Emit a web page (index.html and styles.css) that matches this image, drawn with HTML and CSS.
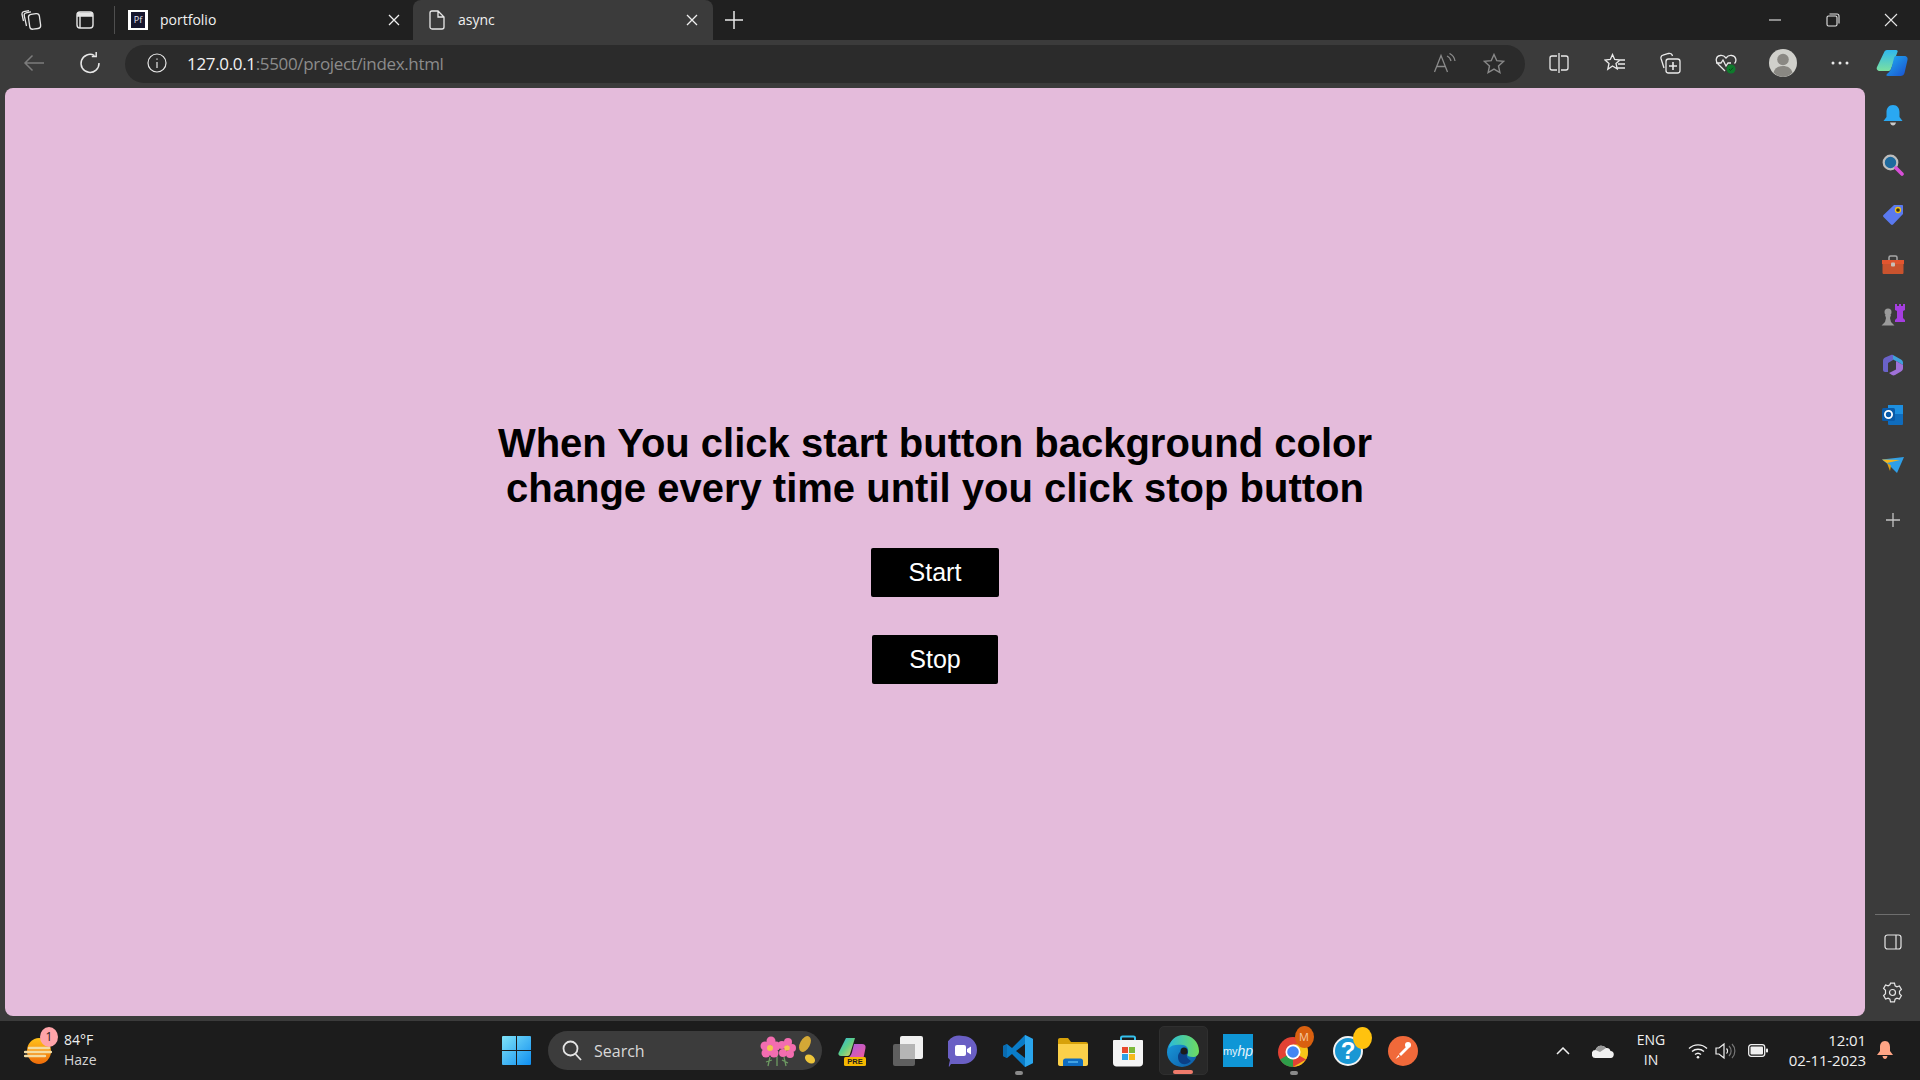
FILE: index.html
```html
<!DOCTYPE html>
<html lang="en">
<head>
  <meta charset="UTF-8" />
  <title>async</title>
  <link rel="stylesheet" href="styles.css">
</head>
<body>
  <div class="desktop">
    <!-- tab strip -->
    <div class="tabstrip">
      <span class="slot first">
        <svg width="22" height="22" viewBox="0 0 22 22" fill="none" stroke="#e6e6e6" stroke-width="1.3"><rect x="8" y="5" width="11" height="15" rx="3" transform="rotate(-8 13 12)"/><path d="M5.500 17 3.200 6.500C3 5 3.800 4 5 3.800L10 2.800M2.500 12 1 5.500C.8 4 1.500 3 2.800 2.700L8 1.600"/></svg>
      </span>
      <span class="slot second">
        <svg width="20" height="20" viewBox="0 0 20 20" fill="none" stroke="#e6e6e6" stroke-width="1.4"><rect x="2" y="2" width="16" height="16" rx="3"/><path d="M2 6h16M5 6v12" /><rect x="2.500" y="2.500" width="15" height="3.500" fill="#e6e6e6" stroke="none"/></svg>
      </span>
      <span class="divider"></span>
      <div class="tab">
        <span class="favicon"><span class="favicon-inner">Pf</span></span>
        <span class="tab-title">portfolio</span>
        <svg class="tab-close" width="12" height="12" viewBox="0 0 12 12" stroke="#f0f0f0" stroke-width="1.3"><path d="M1 1l10 10M11 1 1 11"/></svg>
      </div>
      <div class="tab active">
        <svg class="file-icon" width="16" height="20" viewBox="0 0 16 20" fill="none" stroke="#e8e8e8" stroke-width="1.3"><path d="M3 1h6l6 6v10a2 2 0 0 1-2 2H3a2 2 0 0 1-2-2V3a2 2 0 0 1 2-2zM9 1v6h6"/></svg>
        <span class="tab-title">async</span>
        <svg class="tab-close" width="12" height="12" viewBox="0 0 12 12" stroke="#f0f0f0" stroke-width="1.3"><path d="M1 1l10 10M11 1 1 11"/></svg>
      </div>
      <span class="new-tab">
        <svg width="18" height="18" viewBox="0 0 18 18" stroke="#e8e8e8" stroke-width="1.5"><path d="M9 0v18M0 9h18"/></svg>
      </span>
      <div class="window-controls">
        <svg width="58" height="14" viewBox="0 0 14 14" stroke="#e6e6e6" stroke-width="1.1"><path d="M1 7h12"/></svg>
        <svg width="58" height="14" viewBox="0 0 14 14" fill="none" stroke="#e6e6e6" stroke-width="1.1"><rect x="1" y="3" width="10" height="10" rx="1.500"/><path d="M3.500 1H11a2 2 0 0 1 2 2v7.500"/></svg>
        <svg width="58" height="14" viewBox="0 0 14 14" stroke="#e6e6e6" stroke-width="1.1"><path d="M1 1l12 12M13 1 1 13"/></svg>
      </div>
    </div>

    <!-- toolbar -->
    <div class="toolbar">
      <span class="tool back">
        <svg width="22" height="18" viewBox="0 0 22 18" fill="none" stroke="#7c7c7c" stroke-width="1.5"><path d="M21 9H2M9.500 1.500 2 9l7.500 7.500"/></svg>
      </span>
      <span class="tool reload">
        <svg width="22" height="22" viewBox="0 0 22 22" fill="none" stroke="#e8e8e8" stroke-width="1.5"><path d="M15.500 3.600A9 9 0 1 0 20 11"/><path d="M17.200 0v4.400h-4.400"/></svg>
      </span>
      <div class="addressbar">
        <svg class="info" width="20" height="20" viewBox="0 0 20 20" fill="none" stroke="#e6e6e6" stroke-width="1.2"><circle cx="10" cy="10" r="9"/><path d="M10 9v6M10 5.400v1.400"/></svg>
        <span class="url">127.0.0.1<span class="url-rest">:5500/project/index.html</span></span>
        <svg class="read" width="24" height="20" viewBox="0 0 24 20" fill="none" stroke="#8a8a8a" stroke-width="1.3"><path d="M1.500 19 8 2.500 14.500 19M4 13.500h8.500M14 3a7 7 0 0 1 4 5M16.500 .5a10 10 0 0 1 5.500 7.500"/></svg>
        <svg class="star" width="22" height="21" viewBox="0 0 22 21" fill="none" stroke="#8a8a8a" stroke-width="1.4"><path d="m11 1.500 2.800 6.200 6.700.7-5 4.500 1.400 6.600-5.900-3.400-5.900 3.400 1.400-6.600-5-4.500 6.700-.7z"/></svg>
      </div>
      <div class="tool-group">
        <span class="tool-item">
          <svg width="20" height="20" viewBox="0 0 20 20" fill="none" stroke="#eaeaea" stroke-width="1.3"><path d="M8 3H3a2 2 0 0 0-2 2v10a2 2 0 0 0 2 2h5M12 3h5a2 2 0 0 1 2 2v10a2 2 0 0 1-2 2h-5M10 0v20"/></svg>
        </span>
        <span class="tool-item">
          <svg width="22" height="20" viewBox="0 0 22 20" fill="none" stroke="#eaeaea" stroke-width="1.3"><path d="m8.500 1.500 2.200 5 5.300.5-4 3.500 1.200 5.300-4.700-2.800-4.700 3.300 1.200-5.800-4-3.500 5.300-.5zM15 7h6M14 11h7M13 15h8"/></svg>
        </span>
        <span class="tool-item">
          <svg width="22" height="22" viewBox="0 0 22 22" fill="none" stroke="#eaeaea" stroke-width="1.3"><path d="M5 16 2 6.500C1.600 4.800 2.600 3.500 4 3.200L9.500 1.500C11.500 1 13 2 13.500 4"/><rect x="7" y="7" width="14" height="14" rx="2.500"/><path d="M14 10v8M10 14h8" stroke-width="1.600"/></svg>
        </span>
        <span class="tool-item">
          <svg width="22" height="22" viewBox="0 0 22 22"><path d="M10 19 3 12C0 9 1 4 5 3.500 7.500 3 9.500 4 11 6 12.500 4 14.500 3 17 3.500 21 4 22 9 19.500 11.500M1 11h5l2-3 3 6 2-3h3" fill="none" stroke="#eaeaea" stroke-width="1.300"/><circle cx="16" cy="17" r="4.500" fill="#0e7a2c"/><path d="m14 17 1.500 1.500 2.500-2.800" fill="none" stroke="#0b4a1c" stroke-width="1"/></svg>
        </span>
        <span class="tool-item avatar">
          <svg width="28" height="28" viewBox="0 0 28 28"><circle cx="14" cy="14" r="14" fill="#d0d0cb"/><circle cx="14" cy="10.500" r="5.800" fill="#8a8883"/><path d="M4.500 23.500c1.500-4.500 5-6.500 9.500-6.500s8 2 9.500 6.500A14 14 0 0 1 14 28a14 14 0 0 1-9.500-4.500z" fill="#8a8883"/></svg>
        </span>
        <span class="tool-item dots">
          <svg width="18" height="4" viewBox="0 0 18 4" fill="#eaeaea"><circle cx="2" cy="2" r="1.500"/><circle cx="9" cy="2" r="1.500"/><circle cx="16" cy="2" r="1.500"/></svg>
        </span>
        <span class="tool-item copilot">
          <svg width="32" height="28" viewBox="0 0 32 28"><defs><linearGradient id="cpa" x1="0" y1="0" x2="0" y2="1"><stop offset="0" stop-color="#2fb8ee"/><stop offset="1" stop-color="#7be0a0"/></linearGradient><linearGradient id="cpb" x1="0" y1="0" x2="1" y2="1"><stop offset="0" stop-color="#1fb0f2"/><stop offset="1" stop-color="#1a4fd0"/></linearGradient></defs><path d="M11 1h9c1.500 0 2 1 1.500 2L15 20c-.5 1.500-1.500 2-3 2H4c-2.500 0-4-2-3-4L8 3.500C8.500 2 9.500 1 11 1z" fill="url(#cpa)"/><path d="M20 7h8c3 0 4 2 3.500 4l-3 13c-.5 2-2 3-4 3H12c-2 0-2-1-1-2 3-2 4-5 5-8l2-8c.3-1.300 1-2 2-2z" fill="url(#cpb)"/></svg>
        </span>
      </div>
    </div>

    <div class="workspace">
      <!-- the page itself -->
      <main class="viewport">
        <h1>When You click start button background color<br>change every time until you click stop button</h1>
        <button class="action start" type="button">Start</button>
        <button class="action stop" type="button">Stop</button>
      </main>

      <!-- edge sidebar -->
      <aside class="sidebar">
        <div class="side-icons">
          <span class="side-item"><svg width="22" height="22" viewBox="0 0 22 22"><path d="M11 1c4.500 0 6.500 3.500 6.500 7v5l3 4H1.500l3-4V8C4.500 4.500 6.500 1 11 1z" fill="#2aa8f2"/><path d="M8 18.500h6c-.5 2-1.500 3-3 3s-2.500-1-3-3z" fill="#c9c9c9"/></svg></span>
          <span class="side-item"><svg width="22" height="22" viewBox="0 0 22 22"><circle cx="8.500" cy="8.500" r="6.800" fill="#1e6a9e" stroke="#bdbdbd" stroke-width="2.200"/><path d="m14 14 6 6" stroke="#d84fd8" stroke-width="3.600" stroke-linecap="round"/></svg></span>
          <span class="side-item"><svg width="22" height="22" viewBox="0 0 22 22"><path d="M12 1h8c.6 0 1 .4 1 1v8L11 20.500c-.6.600-1.400.600-2 0L1.500 13c-.6-.6-.6-1.400 0-2z" fill="#5a79ef"/><circle cx="16" cy="6" r="2.500" fill="#3a3010" stroke="#f2c21a" stroke-width="1.300"/></svg></span>
          <span class="side-item"><svg width="24" height="20" viewBox="0 0 24 20"><path d="M8 5V2.500C8 1.500 8.500 1 9.500 1h5c1 0 1.500.5 1.500 1.500V5" fill="none" stroke="#a8a8a8" stroke-width="1.500"/><path d="M1 5h22v4H1z" fill="#e2552f"/><path d="M1.500 9h21v8.500c0 1-.5 1.500-1.500 1.500H3c-1 0-1.500-.5-1.500-1.500z" fill="#c9532e"/><rect x="10" y="7.500" width="4" height="4" rx="1" fill="#c8c0b8"/></svg></span>
          <span class="side-item"><svg width="24" height="22" viewBox="0 0 24 22"><path d="M14 0h2v2h2V0h2v2h2V0h2v6l-2 1v7l2 2v2H14v-2l2-2V7l-2-1z" fill="#a53ee0"/><circle cx="7" cy="8" r="3.500" fill="#9a9a9a"/><path d="M4 11h6l-1 3 1 4 3.500 3.500H.5L4 18l1-4z" fill="#9a9a9a"/></svg></span>
          <span class="side-item"><svg width="22" height="22" viewBox="0 0 22 22"><path d="M11 1 19 5.500C20.500 6.500 21 7.500 21 9v2L14 7 11 5.500z" fill="#3fa0dc"/><path d="M21 11v3c0 1.500-.5 2.500-2 3.500L13 21c-1 .5-2 .5-3 0l-3-2 7-3.500V7z" fill="#a071d8"/><path d="M1 16V7c0-1.500.5-2.500 2-3.500L9 1c.7-.3 1.400-.3 2 0v5L6 9v9l-3 0C2 18 1 17 1 16z" fill="#6a62c9"/></svg></span>
          <span class="side-item"><svg width="22" height="20" viewBox="0 0 22 20"><rect x="6" y="0" width="15" height="10" fill="#1d8fe0"/><path d="M6 9h15v10a1 1 0 0 1-1 1H7a1 1 0 0 1-1-1z" fill="#0f6cbd"/><rect x="0" y="3" width="13" height="13" rx="1.500" fill="#0a5aa8"/><circle cx="6.500" cy="9.500" r="3.600" fill="none" stroke="#fff" stroke-width="1.800"/></svg></span>
          <span class="side-item"><svg width="22" height="16" viewBox="0 0 22 16"><path d="M0 2.500 22 0 15 16 8 9z" fill="#2f9fe8"/><path d="M0 2.500 18 3 5 6z" fill="#f5b51b"/><path d="M5 6 8 14 9 8.500z" fill="#e0a011"/></svg></span>
          <span class="side-item plus"><svg width="16" height="16" viewBox="0 0 16 16" stroke="#c4c4c4" stroke-width="1.300"><path d="M8 1v14M1 8h14"/></svg></span>
        </div>
        <div class="side-bottom">
          <span class="side-rule"></span>
          <span class="side-item"><svg width="18" height="16" viewBox="0 0 18 16" fill="none" stroke="#e6e6e6" stroke-width="1.200"><rect x="1" y="1" width="16" height="14" rx="2.500"/><path d="M12 1v14"/></svg></span>
          <span class="side-item"><svg width="21" height="21" viewBox="0 0 21 21" fill="none" stroke="#e6e6e6" stroke-width="1.200"><circle cx="10.500" cy="10.500" r="3"/><path d="M8.500 1.200h4l.6 2.600 1.800 1 2.500-.8 2 3.500-1.900 1.800v2.400l1.900 1.800-2 3.500-2.500-.8-1.800 1-.6 2.600h-4l-.6-2.600-1.800-1-2.500.8-2-3.500 1.900-1.800V8.300L1.600 6.500l2-3.500 2.500.8 1.800-1z"/></svg></span>
        </div>
      </aside>
    </div>

    <!-- windows taskbar -->
    <footer class="taskbar">
      <div class="weather">
        <svg class="weather-icon" width="28" height="26" viewBox="0 0 28 26"><defs><linearGradient id="sun" x1="0" y1="0" x2="0" y2="1"><stop offset="0" stop-color="#ffc21a"/><stop offset="1" stop-color="#ef6c0a"/></linearGradient></defs><ellipse cx="15" cy="13" rx="12" ry="13" fill="url(#sun)"/><path d="M5 10h20M1 14h26M1 18h20" stroke="#f3dca2" stroke-width="2.400" stroke-linecap="round"/></svg>
        <span class="badge">1</span>
        <div class="weather-text">
          <span>84°F</span>
          <span>Haze</span>
        </div>
      </div>
      <svg class="start-icon" width="29" height="29" viewBox="0 0 29 29"><defs><linearGradient id="win" x1="0" y1="0" x2="1" y2="1"><stop offset="0" stop-color="#7fe3f8"/><stop offset="1" stop-color="#0f8ef0"/></linearGradient></defs><g fill="url(#win)"><path d="M0 1a1 1 0 0 1 1-1h13v14H0zM15 0h13a1 1 0 0 1 1 1v13H15zM0 15h14v14H1a1 1 0 0 1-1-1zM15 15h14v13a1 1 0 0 1-1 1H15z"/></g></svg>
      <div class="search">
        <svg width="20" height="21" viewBox="0 0 20 21" fill="none" stroke="#e4e4e4" stroke-width="1.800"><circle cx="8.500" cy="8.500" r="7"/><path d="m13.500 14 5.500 6"/></svg>
        <span class="search-label">Search</span>
        <svg class="search-art" width="62" height="32" viewBox="0 0 62 32"><path d="M12 22 10 31M26 22l2 9M19 20v11M8 27l6-2M30 28l-6-3" stroke="#6d9a62" stroke-width="1.300"/><g fill="#f36db0"><circle cx="7" cy="11" r="4.500"/><circle cx="13" cy="6" r="4.500"/><circle cx="18" cy="11" r="4.500"/><circle cx="8" cy="18" r="4.500"/><circle cx="16" cy="18" r="4.500"/><circle cx="24" cy="10" r="4"/><circle cx="30" cy="7" r="4"/><circle cx="34" cy="13" r="4"/><circle cx="25" cy="18" r="4"/><circle cx="32" cy="19" r="4"/></g><circle cx="12" cy="13" r="3" fill="#f4c84e"/><circle cx="29" cy="13" r="2.800" fill="#f4c84e"/><ellipse cx="47" cy="9" rx="5" ry="8.500" transform="rotate(28 47 9)" fill="#d4a836"/><ellipse cx="52" cy="24" rx="5.500" ry="4" transform="rotate(35 52 24)" fill="#eec53a"/></svg>
      </div>
      <div class="apps">
        <span class="app"><svg width="30" height="30" viewBox="0 0 30 30"><defs><linearGradient id="pa" x1="0" y1="0" x2="1" y2="1"><stop offset="0" stop-color="#28b4e8"/><stop offset=".5" stop-color="#5fcf86"/><stop offset="1" stop-color="#f0d060"/></linearGradient><linearGradient id="pb" x1="0" y1="0" x2="1" y2="1"><stop offset="0" stop-color="#a85be0"/><stop offset="1" stop-color="#f05a9c"/></linearGradient></defs><path d="M8 2h9l-5 16c-.5 1.500-1.500 2-3 2H3c-2 0-3-1.500-2.500-3z" fill="url(#pa)"/><path d="M16 8h8c2.500 0 4 1.500 3.500 4l-2 10H10c3-2 4-5 4.500-8z" fill="url(#pb)"/><rect x="6" y="21" width="22" height="9" rx="1.500" fill="#f5b800"/><text class="pre-text" x="17" y="28.300" text-anchor="middle">PRE</text></svg></span>
        <span class="app"><svg width="30" height="30" viewBox="0 0 30 30"><rect x="0" y="8" width="22" height="22" rx="2" fill="#5f5f5f"/><rect x="7" y="0" width="23" height="23" rx="2" fill="#f0f0f0"/><rect x="7" y="8" width="15" height="15" fill="#b5b5b5"/></svg></span>
        <span class="app"><svg width="30" height="32" viewBox="0 0 30 32"><path d="M15 1a14 14 0 0 1 0 28H3l-2 3c-.4-1 0-3 1-7A14 14 0 0 1 15 1z" fill="#6a5fc4"/><rect x="7" y="10" width="11" height="11" rx="2" fill="#fff"/><path d="m19 14 4-2.500v8L19 17z" fill="#fff"/></svg></span>
        <span class="app app-open"><svg width="30" height="32" viewBox="0 0 30 32"><path d="M22 0 30 4v24l-8 4L9 19l-5 4-4-2v-10l4-2 5 4z" fill="#0a7cc8"/><path d="M22 0 30 4v24l-8 4z" fill="#2aa5ec"/><path d="M22 9 13 16l9 7z" fill="#1c1c1c"/><path d="M0 11 4 9v14l-4-2z" fill="#0a6bb0"/></svg></span>
        <span class="app"><svg width="30" height="30" viewBox="0 0 30 30"><path d="M0 4c0-1.200.8-2 2-2h8l3 4h15c1.200 0 2 .8 2 2v4H0z" fill="#d7a109"/><path d="M0 8h30v20c0 1.200-.8 2-2 2H2c-1.200 0-2-.8-2-2z" fill="#fbd04a"/><path d="M5 30v-5c0-1.500 1-2.500 2.500-2.500h15c1.500 0 2.500 1 2.500 2.500v5z" fill="#0f6cc0"/><path d="M10 26h10" stroke="#4fb0ee" stroke-width="1.600"/></svg></span>
        <span class="app"><svg width="30" height="32" viewBox="0 0 30 32"><path d="M8 7V3c0-1 .5-1.500 1.500-1.500h11c1 0 1.500.5 1.500 1.500v4" fill="none" stroke="#35c0ec" stroke-width="2"/><path d="M1 5h28c.5 0 1 .5 1 1v22c0 2-1.500 3.500-3.500 3.500h-23C1.500 31.500 0 30 0 28V6c0-.5.500-1 1-1z" fill="#f4f4f4"/><rect x="9" y="12" width="6" height="6" fill="#e8492e"/><rect x="16" y="12" width="6" height="6" fill="#7cb93a"/><rect x="9" y="19" width="6" height="6" fill="#2da1e8"/><rect x="16" y="19" width="6" height="6" fill="#f5ba1c"/></svg></span>
        <span class="app app-active"><svg width="32" height="32" viewBox="0 0 32 32"><defs><linearGradient id="ea" x1="0" y1="0" x2="1" y2="1"><stop offset="0" stop-color="#1a9fe0"/><stop offset="1" stop-color="#0c59a4"/></linearGradient><linearGradient id="eb" x1="0" y1="0" x2="1" y2="0"><stop offset="0" stop-color="#2bbcd8"/><stop offset="1" stop-color="#6fdc5e"/></linearGradient></defs><circle cx="15" cy="17" r="15" fill="url(#ea)"/><path d="M2 13C3 5 9 0 16 0c9 0 16 7 16 16 0 4-3 6-6 6-4 0-6-1-6-3 2-2 2-8-4-9-6-1-12 0-14 3z" fill="url(#eb)"/><path d="M24 26c-6 6-13 3-13-4 0-4 3-7 7-8 3 1 4 4 2 6-1 2 1 4 4 6z" fill="#0b3f86"/><circle cx="17" cy="16" r="3.500" fill="#1c1c1c"/></svg></span>
        <span class="app"><span class="myhp">my<em>hp</em></span></span>
        <span class="app app-open"><svg width="30" height="32" viewBox="0 0 30 32"><circle cx="15" cy="17" r="15" fill="#e24234"/><path d="M15 17 2 24.500A15 15 0 0 0 15 32z" fill="#2e9d49"/><path d="M15 17 28 24.500 15 32A15 15 0 0 0 30 17c0-3-1-6-2-7.500H15z" fill="#f5c518"/><circle cx="15" cy="17" r="7.500" fill="#fff"/><circle cx="15" cy="17" r="5.800" fill="#4285f4"/></svg><span class="mail-badge">M</span></span>
        <span class="app"><svg width="30" height="30" viewBox="0 0 30 30"><circle cx="15" cy="15" r="14" fill="#1997d4" stroke="#f2f2f2" stroke-width="2"/><text class="help-mark" x="15" y="23" text-anchor="middle">?</text></svg><span class="dot-badge"></span></span>
        <span class="app"><svg width="30" height="30" viewBox="0 0 30 30"><circle cx="15" cy="15" r="15" fill="#f0693a"/><circle cx="20" cy="9" r="3" fill="#fff"/><path d="M19 10 11 18l2 2 8-8zM10.500 19l-3 4 4-2.500z" fill="#fff"/></svg></span>
      </div>
      <div class="tray">
        <span class="tray-slot caret"><svg width="14" height="8" viewBox="0 0 14 8" fill="none" stroke="#f0f0f0" stroke-width="1.500"><path d="m1 7 6-6 6 6"/></svg></span>
        <span class="tray-slot cloud"><svg width="22" height="14" viewBox="0 0 22 14"><path d="M4 14A4 4 0 0 1 3.500 6 6 6 0 0 1 14 4a4 4 0 0 1 4.500 3A3.500 3.500 0 0 1 18 14z" fill="#f0f0f0"/><path d="M3.500 6A6 6 0 0 1 14 4L8 8z" fill="#9a9a9a"/></svg></span>
        <span class="tray-slot lang">ENG<br>IN</span>
        <span class="tray-slot wifi"><svg width="20" height="16" viewBox="0 0 20 16" fill="none" stroke="#f0f0f0" stroke-width="1.400"><path d="M1 5.500a13 13 0 0 1 18 0M4 8.500a9 9 0 0 1 12 0M7 11.500a4.500 4.500 0 0 1 6 0"/><circle cx="10" cy="14.300" r="1.300" fill="#f0f0f0" stroke="none"/></svg></span>
        <span class="tray-slot speaker"><svg width="21" height="18" viewBox="0 0 21 18" fill="none" stroke="#f0f0f0" stroke-width="1.200"><path d="M1 6v6h3l5 4V2L4 6z"/><path d="M11.500 6.500a3.500 3.500 0 0 1 0 5"/><path d="M14 4a7 7 0 0 1 0 10M17 2a10 10 0 0 1 0 14" stroke="#777"/></svg></span>
        <span class="tray-slot battery"><svg width="20" height="13" viewBox="0 0 20 13"><rect x=".7" y=".7" width="16" height="11.600" rx="2.500" fill="none" stroke="#f0f0f0" stroke-width="1.300"/><rect x="2.500" y="2.500" width="12.500" height="8" rx="1" fill="#f0f0f0"/><rect x="18" y="4.500" width="2" height="4" rx=".8" fill="#f0f0f0"/></svg></span>
        <span class="clock">12:01<br>02-11-2023</span>
        <span class="tray-slot notify"><svg width="16" height="19" viewBox="0 0 16 19"><path d="M8 0c3.500 0 5 3 5 6v4l3 4H0l3-4V6c0-3 1.500-6 5-6z" fill="#ffa585"/><path d="M5.500 15h5c-.3 2-1.300 3-2.500 3s-2.200-1-2.500-3z" fill="#ffa585"/></svg></span>
      </div>
    </footer>
  </div>
</body>
</html>
```

FILE: styles.css
```css
* {
  box-sizing: border-box;
}

html, body {
  margin: 0;
  height: 100%;
  overflow: hidden;
}

body {
  font-family: 'Open Sans', 'Noto Sans', sans-serif;
  background-color: #1c1c1c;
  color: #f0f0f0;
}

svg {
  flex: none;
}

.desktop {
  display: flex;
  flex-direction: column;
  width: 1920px;
  height: 1080px;
}

/* tab strip */
.tabstrip {
  display: flex;
  align-items: center;
  height: 40px;
  background-color: #202020;
  flex: none;
}

.slot {
  display: flex;
  justify-content: center;
  align-items: center;
}

.slot.first {
  width: 64px;
}

.slot.second {
  width: 42px;
}

.divider {
  width: 1px;
  height: 28px;
  margin-left: 8px;
  margin-right: 3px;
  background-color: #4f4f4f;
}

.tab {
  display: flex;
  align-items: center;
  width: 295px;
  height: 40px;
  padding-left: 10px;
  font-size: 14px;
  color: #f0f0f0;
}

.tab.active {
  width: 300px;
  padding-left: 16px;
  background-color: #3b3b3b;
  border-radius: 8px 8px 0 0;
}

.favicon {
  display: flex;
  justify-content: center;
  align-items: center;
  width: 20px;
  height: 20px;
  background-color: #fff;
  flex: none;
}

.favicon-inner {
  display: block;
  width: 14px;
  height: 16px;
  background-color: #16162e;
  color: #e8e8f4;
  font-size: 9px;
  line-height: 16px;
  text-align: center;
}

.tab-title {
  margin-left: 12px;
  padding-bottom: 2px;
  flex: 1;
}

.file-icon + .tab-title {
  margin-left: 13px;
}

.tab-close {
  margin-right: 13px;
}

.tab.active .tab-close {
  margin-right: 15px;
}

.new-tab {
  display: flex;
  width: 42px;
  justify-content: center;
}

.window-controls {
  display: flex;
  margin-left: auto;
}

/* toolbar */
.toolbar {
  display: flex;
  align-items: center;
  height: 48px;
  padding-bottom: 2px;
  background-color: #3b3b3b;
  flex: none;
}

.tool {
  display: flex;
  justify-content: center;
  align-items: center;
}

.tool.back {
  width: 68px;
}

.tool.reload {
  width: 44px;
}

.addressbar {
  display: flex;
  align-items: center;
  width: 1400px;
  height: 38px;
  margin-top: 2px;
  margin-left: 13px;
  padding-left: 22px;
  padding-bottom: 2px;
  background-color: #2b2b2b;
  border-radius: 19px;
}

.url {
  margin-left: 20px;
  font-size: 17px;
  letter-spacing: -0.34px;
  color: #f2f2f2;
}

.url-rest {
  color: #8c8c8c;
}

.read {
  margin-left: auto;
}

.star {
  margin-left: 26px;
  margin-right: 20px;
}

.tool-group {
  display: flex;
  align-items: center;
  margin-left: 6.25px;
}

.tool-item {
  display: flex;
  justify-content: center;
  align-items: center;
  width: 55.5px;
}

.tool-item.avatar {
  width: 59px;
}

.tool-item.dots {
  width: 55px;
}

.tool-item.copilot {
  width: 50px;
}

/* page area */
.workspace {
  display: flex;
  height: 933px;
  flex: none;
  background-color: #3b3b3b;
  padding-left: 5px;
}

.viewport {
  display: flex;
  flex-direction: column;
  align-items: center;
  width: 1860px;
  height: 928px;
  padding-top: 333px;
  background-color: #e4bbdb;
  border-radius: 8px;
  color: #000;
  font-family: 'Liberation Sans', Arial, sans-serif;
}

h1 {
  margin: 0;
  font-size: 40px;
  line-height: 45px;
  font-weight: 700;
  text-align: center;
}

.action {
  display: block;
  padding: 10px 37.5px;
  border: none;
  border-radius: 2px;
  background-color: #000;
  color: #fff;
  font-family: inherit;
  font-size: 25px;
  cursor: pointer;
}

.action.start {
  margin-top: 37px;
}

.action.stop {
  margin-top: 38px;
}

/* sidebar */
.sidebar {
  display: flex;
  flex-direction: column;
  justify-content: space-between;
  width: 55px;
  height: 933px;
  padding-bottom: 4px;
}

.side-icons {
  display: flex;
  flex-direction: column;
  padding-top: 2px;
}

.side-item {
  display: flex;
  justify-content: center;
  align-items: center;
  height: 50px;
}

.side-item.plus {
  height: 60px;
}

.side-bottom {
  display: flex;
  flex-direction: column;
}

.side-rule {
  display: block;
  width: 35px;
  height: 1px;
  margin: 0 0 2px 10px;
  background-color: #6e6e6e;
}

/* taskbar */
.taskbar {
  display: flex;
  align-items: center;
  height: 59px;
  flex: none;
  background-color: #1c1c1c;
  padding-left: 24px;
}

.weather {
  position: relative;
  display: flex;
  align-items: center;
  width: 478px;
}

.badge {
  position: absolute;
  left: 16px;
  top: -3px;
  width: 18px;
  height: 20px;
  border-radius: 50%;
  background-color: #ffa4a9;
  color: #2a1a1a;
  font-size: 12px;
  line-height: 20px;
  text-align: center;
}

.weather-text {
  display: flex;
  flex-direction: column;
  margin-left: 12px;
  padding-bottom: 2px;
  font-size: 14px;
  line-height: 20px;
}

.weather-text span:last-child {
  color: #d4d4d4;
}

.search {
  display: flex;
  align-items: center;
  width: 274px;
  height: 39px;
  margin-left: 17px;
  padding-left: 14px;
  background-color: #3c3c3c;
  border-radius: 20px;
  font-size: 16px;
  color: #d8d8d8;
}

.search-label {
  margin-left: 12px;
}

.search-art {
  margin-left: auto;
  margin-right: 2px;
}

.apps {
  display: flex;
  align-items: center;
  margin-left: 3.5px;
}

.app {
  position: relative;
  display: flex;
  justify-content: center;
  align-items: center;
  width: 55px;
  height: 49px;
}

.app-active::before {
  content: "";
  position: absolute;
  left: 3px;
  right: 3px;
  top: 0;
  bottom: 0;
  background-color: #282828;
  border: 1px solid #2f2f2f;
  border-radius: 5px;
}

.app-active svg {
  position: relative;
}

.app-active::after {
  content: "";
  position: absolute;
  left: 17px;
  bottom: 1px;
  width: 20px;
  height: 4px;
  border-radius: 2px;
  background-color: #ef7b6b;
}

.app-open::after {
  content: "";
  position: absolute;
  left: 24px;
  bottom: 0;
  width: 8px;
  height: 4px;
  border-radius: 2px;
  background-color: #8a8a8a;
}

.pre-text {
  font-family: 'Liberation Sans', sans-serif;
  font-size: 7.5px;
  font-weight: 700;
  fill: #1c1c1c;
}

.myhp {
  display: flex;
  justify-content: center;
  align-items: center;
  width: 30px;
  height: 33px;
  background-color: #0f96d6;
  color: #e6f4fb;
  font-family: 'Liberation Sans', sans-serif;
  font-size: 11px;
}

.myhp em {
  font-size: 14px;
}

.mail-badge {
  position: absolute;
  left: 29px;
  top: 0;
  width: 19px;
  height: 22px;
  border-radius: 50%;
  background-color: #d9600f;
  color: #f5c9a0;
  font-size: 11px;
  line-height: 22px;
  text-align: center;
}

.help-mark {
  font-family: 'Liberation Sans', sans-serif;
  font-size: 24px;
  font-weight: 700;
  fill: #fff;
}

.dot-badge {
  position: absolute;
  left: 32px;
  top: 1px;
  width: 19px;
  height: 22px;
  border-radius: 50%;
  background-color: #ffc20e;
}

.tray {
  display: flex;
  align-items: center;
  margin-left: auto;
  padding-right: 16px;
}

.tray-slot {
  display: flex;
  justify-content: center;
  align-items: center;
  text-align: center;
}

.caret, .cloud {
  width: 40px;
}

.lang {
  width: 56px;
  padding-bottom: 2px;
  font-size: 14px;
  line-height: 20px;
  color: #f0f0f0;
}

.wifi {
  width: 38px;
}

.speaker {
  width: 16px;
}

.battery {
  width: 50px;
}

.clock {
  width: 83px;
  padding-bottom: 2px;
  font-size: 15px;
  line-height: 20px;
  letter-spacing: -0.1px;
  text-align: right;
  white-space: nowrap;
}

.notify {
  width: 38px;
}
```
